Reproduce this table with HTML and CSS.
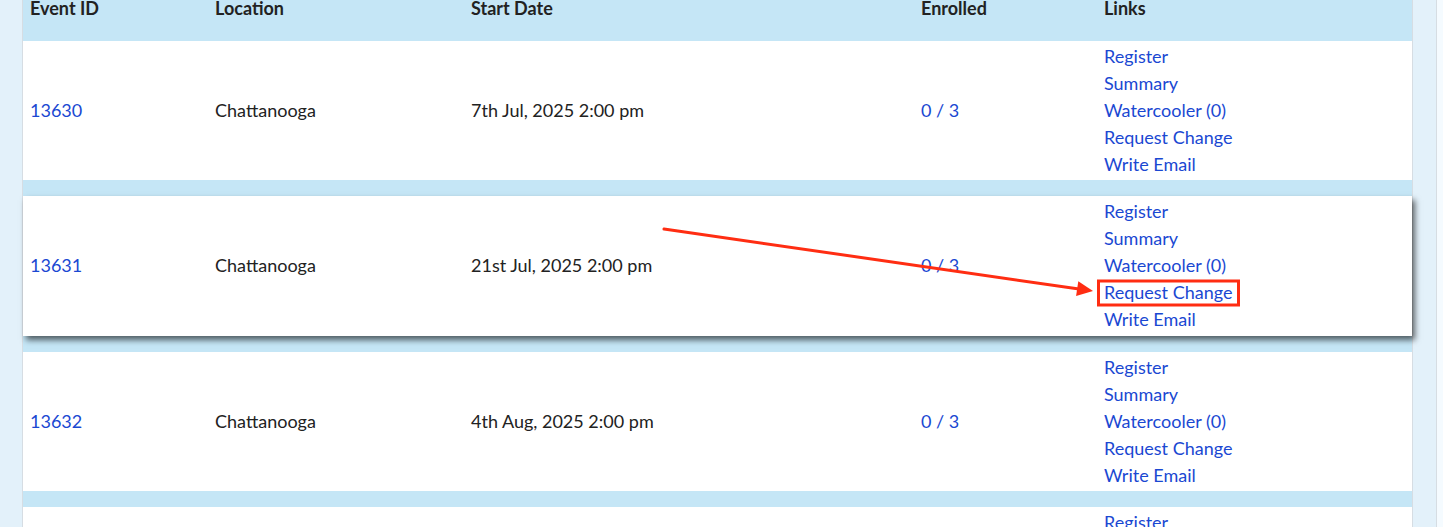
FILE: index.html
```html
<!DOCTYPE html>
<html lang="en">
<head>
<meta charset="utf-8">
<title>Events</title>
<link rel="stylesheet" href="styles.css">
</head>
<body>
<div class="page">
  <div class="gutter"></div>
  <main class="main">
    <div class="events">
      <div class="row head">
        <div class="cell">Event ID</div>
        <div class="cell">Location</div>
        <div class="cell">Start Date</div>
        <div class="cell">Enrolled</div>
        <div class="cell">Links</div>
      </div>
      <div class="row item">
        <div class="cell"><a href="#">13630</a></div>
        <div class="cell">Chattanooga</div>
        <div class="cell">7th Jul, 2025 2:00 pm</div>
        <div class="cell"><a href="#">0 / 3</a></div>
        <div class="cell links">
          <a href="#">Register</a><a href="#">Summary</a><a href="#">Watercooler (0)</a><a href="#">Request Change</a><a href="#">Write Email</a>
        </div>
      </div>
      <div class="row item raised">
        <div class="cell"><a href="#">13631</a></div>
        <div class="cell">Chattanooga</div>
        <div class="cell">21st Jul, 2025 2:00 pm</div>
        <div class="cell"><a href="#">0 / 3</a></div>
        <div class="cell links">
          <a href="#">Register</a><a href="#">Summary</a><a href="#">Watercooler (0)</a><a href="#">Request Change</a><a href="#">Write Email</a>
        </div>
      </div>
      <div class="row item">
        <div class="cell"><a href="#">13632</a></div>
        <div class="cell">Chattanooga</div>
        <div class="cell">4th Aug, 2025 2:00 pm</div>
        <div class="cell"><a href="#">0 / 3</a></div>
        <div class="cell links">
          <a href="#">Register</a><a href="#">Summary</a><a href="#">Watercooler (0)</a><a href="#">Request Change</a><a href="#">Write Email</a>
        </div>
      </div>
      <div class="row item">
        <div class="cell"><a href="#">13633</a></div>
        <div class="cell">Chattanooga</div>
        <div class="cell">18th Aug, 2025 2:00 pm</div>
        <div class="cell"><a href="#">0 / 3</a></div>
        <div class="cell links">
          <a href="#">Register</a><a href="#">Summary</a><a href="#">Watercooler (0)</a><a href="#">Request Change</a><a href="#">Write Email</a>
        </div>
      </div>
    </div>
  </main>
  <div class="rail"></div>
  <div class="edge"></div>
</div>
<svg class="annot" width="1443" height="527" viewBox="0 0 1443 527" aria-hidden="true">
  <line x1="664" y1="229" x2="1079" y2="289" stroke="#ff2d12" stroke-width="3" stroke-linecap="round"/>
  <polygon points="1093,291 1078.3,281.3 1076.1,296.1" fill="#ff2d12"/>
  <rect x="1098.5" y="281" width="140" height="24" fill="none" stroke="#ff2d12" stroke-width="3"/>
</svg>
</body>
</html>
```

FILE: styles.css
```css
html, body {
  margin: 0;
  padding: 0;
}
body {
  position: relative;
  width: 1443px;
  height: 527px;
  overflow: hidden;
  background: #e3f1fa;
  font-family: "Lato", "Open Sans", sans-serif;
  font-size: 18px;
  color: #222;
}
.page {
  display: flex;
  height: 527px;
}
.gutter {
  width: 22px;
  flex: none;
}
.main {
  width: 1389px;
  flex: none;
  border-left: 1px solid #d6dde3;
  border-right: 1px solid #d6dde3;
  background: #c5e6f6;
  overflow: visible;
  position: relative;
  z-index: 1;
}
.rail {
  width: 23px;
  flex: none;
  border-right: 1px solid #d6dde3;
}
.edge {
  width: 6px;
  flex: none;
  background: #f5fbff;
}
.events {
  display: flex;
  flex-direction: column;
  gap: 16px;
}
.row {
  display: grid;
  grid-template-columns: 185px 256px 450px 183px 315px;
}
.cell {
  padding-left: 7px;
}
.head {
  height: 41px;
  background: #c5e6f6;
  font-weight: 700;
  line-height: 16px;
  color: #222;
  margin-bottom: -16px;
}
.item {
  height: 139px;
  box-sizing: border-box;
  padding: 2px 0;
  background: #fff;
  align-items: center;
  line-height: 27px;
}
.raised {
  height: 140px;
  padding: 1px 0 3px;
  position: relative;
  z-index: 2;
  box-shadow: 3px 4px 6px rgba(0, 0, 0, 0.6);
}
a {
  color: #1a48d2;
  text-decoration: none;
}
.links {
  display: flex;
  flex-direction: column;
}
.annot {
  position: absolute;
  left: 0;
  top: 0;
  z-index: 5;
  pointer-events: none;
}
```
